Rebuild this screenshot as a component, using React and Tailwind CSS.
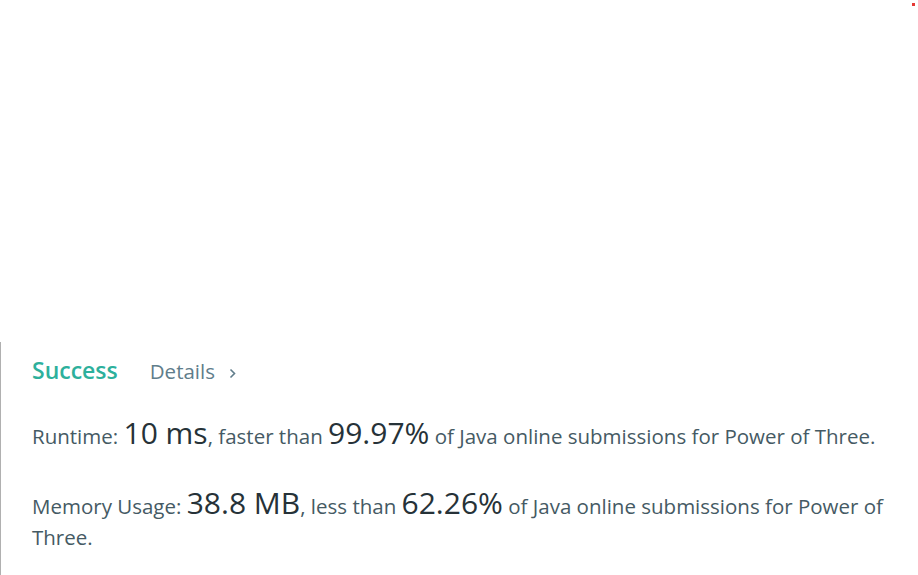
export default function App() {
  return (
    <div className="relative w-[918px] h-[575px] bg-white overflow-hidden">
      <div className="absolute right-[3px] top-[3px] w-[3px] h-[3px] bg-[#e53935]" />
      <div className="pt-[342px] h-full">
        <div className="h-full border-l border-[#b0b0b0] pl-[31px] pr-[24px] font-['Open_Sans',sans-serif]">
          <div className="flex items-baseline pt-[11px] h-[48px]">
            <span className="text-[23px] font-semibold text-[#2db09c]">Success</span>
            <span className="ml-[32px] text-[20.5px] text-[#607d8b]">Details</span>
            <svg className="ml-[14px] self-center mt-[3px]" width="7" height="11" viewBox="0 0 7 11" fill="none">
              <path d="M1.5 1.5L5.5 5.5L1.5 9.5" stroke="#607d8b" strokeWidth="1.6" />
            </svg>
          </div>
          <p className="mt-[27px] text-[20.5px] leading-[32px] text-[#455a64]">
            Runtime: <span className="text-[30px] leading-[32px] text-[#263238]">10 ms</span>, faster than{" "}
            <span className="text-[30px] leading-[32px] text-[#263238]">99.97%</span> of Java online submissions for Power of Three.
          </p>
          <p className="mt-[35px] text-[20.5px] leading-[31px] text-[#455a64]">
            Memory Usage: <span className="text-[30px] leading-[31px] text-[#263238]">38.8 MB</span>, less than{" "}
            <span className="text-[30px] leading-[31px] text-[#263238]">62.26%</span> of Java online submissions for Power of Three.
          </p>
        </div>
      </div>
    </div>
  );
}
